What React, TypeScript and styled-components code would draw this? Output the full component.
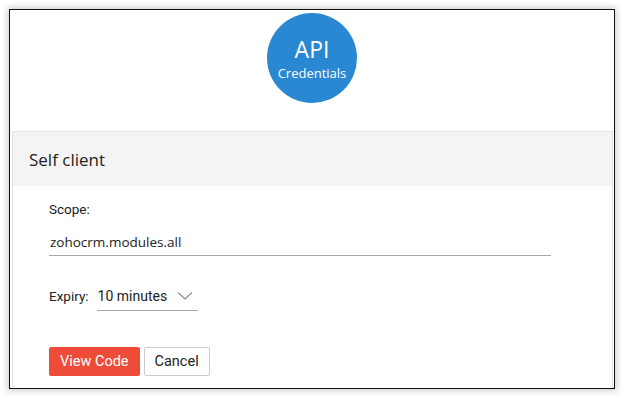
import React from 'react';
import styled, {createGlobalStyle} from 'styled-components';

const GlobalStyle = createGlobalStyle`
  html, body {
    margin: 0;
    padding: 0;
    background: #ffffff;
  }
  body {
    width: 626px;
    height: 399px;
    overflow: hidden;
    font-family: "Open Sans", "Liberation Sans", sans-serif;
  }
`
const Page = styled('div')`
  padding: 9px 11px 10px 9px;
  box-sizing: border-box;
  width: 626px;
  height: 399px;
`
const Window = styled('div')`
  box-sizing: border-box;
  width: 606px;
  height: 380px;
  border: 1px solid #111111;
  background: #ffffff;
  box-shadow: 0 0 6px 2px rgba(0, 0, 0, 0.18);
  overflow: hidden;
  display: flex;
  flex-direction: column;
  padding: 0 1px 0 2px;
`
const Badge = styled('div')`
  align-self: center;
  margin: 3px 0 0 -1px;
  width: 90px;
  height: 90px;
  border-radius: 50%;
  background: #2a88d2;
  color: #ffffff;
  display: flex;
  flex-direction: column;
  align-items: center;
  justify-content: center;
  padding-top: 2px;
  box-sizing: border-box;
`
const BadgeTitle = styled('span')`
  font-size: 23px;
  line-height: 26px;
`
const BadgeSub = styled('span')`
  font-size: 13px;
  line-height: 18px;
  margin-top: 2px;
`
const Card = styled('div')`
  margin-top: 28px;
  flex: 1;
  border: 1px solid #e3e3e3;
  border-bottom: none;
`
const CardHeader = styled('div')`
  height: 54px;
  background: #f4f4f4;
  display: flex;
  align-items: center;
  padding-left: 16px;
  font-size: 17px;
  color: #222222;
`
const CardBody = styled('div')`
  padding: 14px 0 0 36px;
  display: flex;
  flex-direction: column;
`
const Label = styled('div')`
  font-family: Roboto, "Liberation Sans", sans-serif;
  font-size: 13.5px;
  color: #222222;
  line-height: 18px;
`
const TextField = styled('div')`
  margin-top: 14px;
  width: 501px;
  border-bottom: 1px solid #a8a8a8;
  font-size: 13.5px;
  color: #222222;
  padding: 0 0 3px 1px;
  line-height: 20px;
`
const ExpiryRow = styled('div')`
  display: flex;
  align-items: baseline;
  margin-top: 31px;
  gap: 8px;
`
const Select = styled('div')`
  width: 101px;
  box-sizing: border-box;
  border-bottom: 1px solid #a8a8a8;
  display: flex;
  align-items: center;
  justify-content: space-between;
  padding: 0 5px 5px 1px;
  font-family: Roboto, "Liberation Sans", sans-serif;
  font-size: 14px;
  line-height: 18px;
  color: #222222;
`
const Actions = styled('div')`
  display: flex;
  gap: 4px;
  margin-top: 36px;
`
const Button = styled('button')<{ $primary?: boolean }>`
  height: 29px;
  padding: 0 ${p => p.$primary ? 10 : 10}px;
  border-radius: 2px;
  font-family: Roboto, "Liberation Sans", sans-serif;
  font-size: 14.5px;
  cursor: pointer;
  border: 1px solid ${p => p.$primary ? '#ee4c38' : '#cccccc'};
  background: ${p => p.$primary ? '#ee4c38' : '#ffffff'};
  color: ${p => p.$primary ? '#ffffff' : '#222222'};
`

const Chevron = () => (
    <svg width="16" height="10" viewBox="0 0 16 10">
        <path d="M1 1.5 L8 8 L15 1.5" fill="none" stroke="#8a8a8a" strokeWidth="1.1"/>
    </svg>
)

const App = () => {
    return (
        <Page>
            <GlobalStyle/>
            <Window>
                <Badge>
                    <BadgeTitle>API</BadgeTitle>
                    <BadgeSub>Credentials</BadgeSub>
                </Badge>
                <Card>
                    <CardHeader>Self client</CardHeader>
                    <CardBody>
                        <Label>Scope:</Label>
                        <TextField>zohocrm.modules.all</TextField>
                        <ExpiryRow>
                            <Label>Expiry:</Label>
                            <Select>
                                10 minutes
                                <Chevron/>
                            </Select>
                        </ExpiryRow>
                        <Actions>
                            <Button $primary>View Code</Button>
                            <Button>Cancel</Button>
                        </Actions>
                    </CardBody>
                </Card>
            </Window>
        </Page>
    );
};

export default App;
